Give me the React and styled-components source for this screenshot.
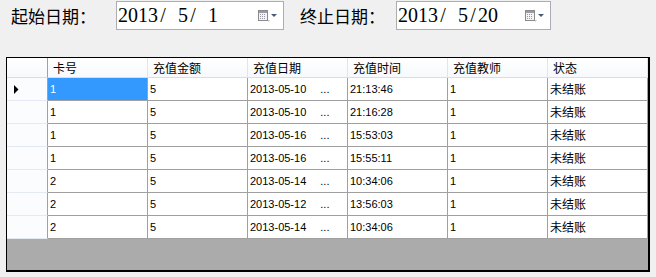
import React from 'react';
import styled, { createGlobalStyle } from 'styled-components';

const GlobalStyle = createGlobalStyle`
  body {
    margin: 0;
    background: #f0f0f0;
    font-family: "Liberation Sans", "Noto Sans CJK SC", sans-serif;
  }
`

const Toolbar = styled.div`
  display: flex;
  align-items: flex-start;
  padding: 1px 0 0 11px;
  height: 29px;
`

const Label = styled.div`
  width: ${p => p.width}px;
  height: 29px;
  line-height: 29px;
  font-family: "Noto Sans CJK SC", sans-serif;
  font-size: 17px;
  color: #000;
  white-space: nowrap;
`

const DateBox = styled.div`
  box-sizing: border-box;
  width: ${p => p.width}px;
  height: 29px;
  margin-right: ${p => p.gap || 0}px;
  background: #fff;
  border: 1px solid #abadb3;
  display: flex;
  align-items: center;
  padding: 0 6px 0 1px;
`

const DateText = styled.span`
  flex: 1;
  display: flex;
  font-family: "Liberation Serif", serif;
  font-size: 20px;
  color: #000;
`

const Slot = styled.span`
  display: inline-block;
  width: 10px;
  text-align: center;
`

const MonoText = ({ text }) => (
  <DateText>
    {text.split('').map((ch, i) => <Slot key={i}>{ch === ' ' ? '\u00a0' : ch}</Slot>)}
  </DateText>
)

const CalendarIcon = () => (
  <svg width="19" height="12" viewBox="0 0 19 12">
    <rect x="0.5" y="0.5" width="9" height="10" fill="#f4f4f4" stroke="#8a8a8a" />
    <rect x="1" y="1" width="8" height="2" fill="#9a9aa4" />
    {[2, 4, 6].map(x => [4, 6, 8].map(y => (
      <rect key={x + '-' + y} x={x} y={y} width="1" height="1" fill="#9a9aa4" />
    )))}
    <path d="M10 11 L11 11 L11 10" stroke="#b8b8b8" fill="none" />
    <path d="M13 4 L19 4 L16 7 Z" fill="#4a5a78" />
  </svg>
)

const Grid = styled.div`
  box-sizing: border-box;
  margin: 27px 0 0 6px;
  width: 644px;
  height: 215px;
  background: #ababab;
  border-style: solid;
  border-color: #000;
  border-width: 1px 2px 2px 1px;
  overflow: hidden;
`

const Row = styled.div`
  display: grid;
  grid-template-columns: 41px repeat(6, 100px);
  height: ${p => p.header ? 20 : 23}px;
`

const HeadCell = styled.div`
  box-sizing: border-box;
  background: linear-gradient(#ffffff, #f7f9fc);
  border-bottom: 1px solid #d5dfea;
  border-right: 1px solid ${p => p.corner ? '#a0a0a0' : '#e2e6ec'};
  padding-left: 5px;
  font-family: "Noto Sans CJK SC", sans-serif;
  font-size: 12px;
  line-height: 19px;
  color: #000;
  white-space: nowrap;
`

const RowHead = styled.div`
  box-sizing: border-box;
  background: #fbfcfe;
  border-bottom: 1px solid #e3eaf4;
  border-right: 1px solid #a0a0a0;
  display: flex;
  align-items: center;
  padding-left: 7px;
`

const Cell = styled.div`
  box-sizing: border-box;
  background: ${p => p.selected ? '#3399ff' : '#fff'};
  color: ${p => p.selected ? '#fff' : '#000'};
  border-bottom: 1px solid #a0a0a0;
  border-right: 1px solid #a0a0a0;
  padding-left: 2px;
  font-family: "Liberation Sans", "Noto Sans CJK SC", sans-serif;
  font-size: 11px;
  line-height: 22px;
  white-space: nowrap;
  overflow: hidden;
`

const CnText = styled.span`
  font-family: "Noto Sans CJK SC", sans-serif;
  font-size: 12px;
`

const Ellipsis = styled.span`
  margin-left: 14px;
`

const Arrow = () => (
  <svg width="5" height="9" viewBox="0 0 5 9">
    <path d="M0 0 L4.5 4.5 L0 9 Z" fill="#000" />
  </svg>
)

const columns = ['卡号', '充值金额', '充值日期', '充值时间', '充值教师', '状态']

const rows = [
  ['1', '5', '2013-05-10', '21:13:46', '1'],
  ['1', '5', '2013-05-10', '21:16:28', '1'],
  ['1', '5', '2013-05-16', '15:53:03', '1'],
  ['1', '5', '2013-05-16', '15:55:11', '1'],
  ['2', '5', '2013-05-14', '10:34:06', '1'],
  ['2', '5', '2013-05-12', '13:56:03', '1'],
  ['2', '5', '2013-05-14', '10:34:06', '1'],
]

export default function App() {
  return (
    <>
      <GlobalStyle />
      <Toolbar>
        <Label width={105}>起始日期：</Label>
        <DateBox width={168} gap={16}>
          <MonoText text="2013/ 5/ 1" />
          <CalendarIcon />
        </DateBox>
        <Label width={96}>终止日期：</Label>
        <DateBox width={155}>
          <MonoText text="2013/ 5/20" />
          <CalendarIcon />
        </DateBox>
      </Toolbar>
      <Grid>
        <Row header>
          <HeadCell corner />
          {columns.map(c => <HeadCell key={c}>{c}</HeadCell>)}
        </Row>
        {rows.map((r, i) => (
          <Row key={i}>
            <RowHead>{i === 0 && <Arrow />}</RowHead>
            <Cell selected={i === 0}>{r[0]}</Cell>
            <Cell>{r[1]}</Cell>
            <Cell>{r[2]}<Ellipsis>...</Ellipsis></Cell>
            <Cell>{r[3]}</Cell>
            <Cell>{r[4]}</Cell>
            <Cell><CnText>未结账</CnText></Cell>
          </Row>
        ))}
      </Grid>
    </>
  )
}
